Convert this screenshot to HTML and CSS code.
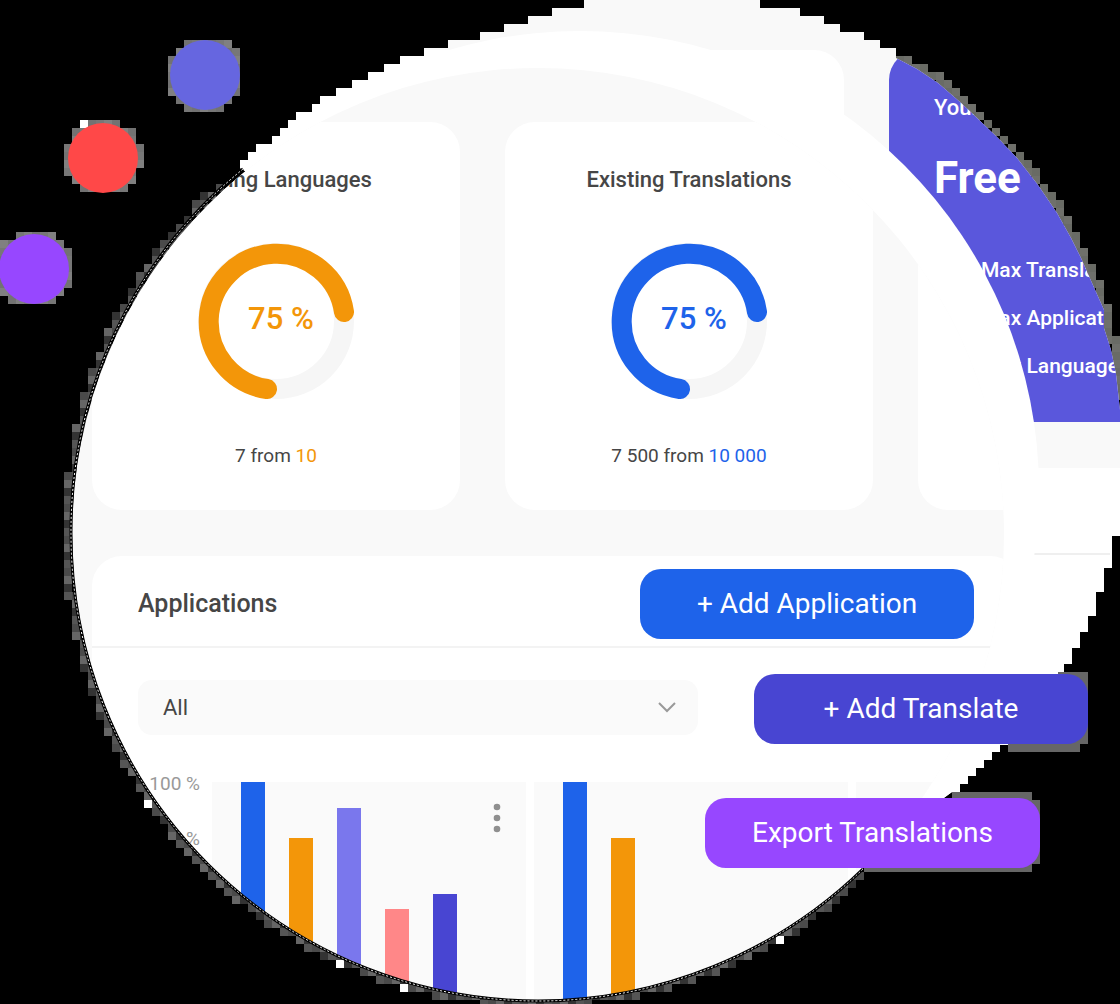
FILE: index.html
```html
<!DOCTYPE html>
<html lang="en">
<head>
<meta charset="utf-8">
<meta name="viewport" content="width=device-width, initial-scale=1">
<title>Translations dashboard</title>
<link rel="stylesheet" href="styles.css">
</head>
<body>
<main class="stage">
  <svg class="layer" aria-hidden="true">
    <g id="halo" shape-rendering="crispEdges">
      <circle data-tone="soft" cx="205" cy="75" r="34"/>
      <circle data-tone="soft" cx="103" cy="158" r="34"/>
      <circle data-tone="soft" cx="34" cy="269" r="34"/>
      <path data-tone="mixed" d="M222 186A470 470 0 0 0 68 534A470 470 0 0 0 538 1003A470 470 0 0 0 866 870"/>
      <path data-tone="olive" d="M900 58L940 80L962 100L980 116L1020 156L1060 211L1083 257L1090 272L1104 306L1113 345L1119 400"/>
    </g>
    <g class="specks">
      <path d="M80 120h8v8h-8zM144 800h8v8h-8zM336 960h8v8h-8zM400 984h8v8h-8zM776 936h8v8h-8z"/>
    </g>
    <g class="dots">
      <circle class="fill-indigo" cx="205" cy="75" r="35"/>
      <circle class="fill-red" cx="103" cy="158" r="35"/>
      <circle class="fill-violet" cx="34" cy="269" r="35"/>
    </g>
  </svg>

  <div class="backdrop">
    <div class="backdrop-card"></div>
    <section class="plan">
      <p class="plan-label">Your Plan</p>
      <h2 class="plan-name">Free</h2>
      <ul class="plan-limits">
        <li>Max Translations</li>
        <li>Max Applications</li>
        <li>Max Languages</li>
      </ul>
    </section>
    <div class="backdrop-panel"></div>
    <div class="ring"></div>
  </div>

  <div class="lens">
    <div class="stats">
      <article class="card">
        <h3 class="card-title">Existing Languages</h3>
        <div class="gauge tone-orange">
          <svg viewBox="0 0 156 156" aria-hidden="true"><circle class="track" cx="78" cy="78" r="68"/><path class="value" d="M146 69A68 68 0 1 0 69 146"/></svg>
          <span class="gauge-text">75 %</span>
        </div>
        <p class="card-note tone-orange">7 from <span>10</span></p>
      </article>
      <article class="card">
        <h3 class="card-title">Existing Translations</h3>
        <div class="gauge tone-blue">
          <svg viewBox="0 0 156 156" aria-hidden="true"><circle class="track" cx="78" cy="78" r="68"/><path class="value" d="M146 69A68 68 0 1 0 69 146"/></svg>
          <span class="gauge-text">75 %</span>
        </div>
        <p class="card-note tone-blue">7 500 from <span>10 000</span></p>
      </article>
      <article class="card"></article>
    </div>
    <section class="panel">
      <header class="panel-head">
        <h2 class="panel-title">Applications</h2>
        <button class="btn btn-blue" type="button">+ Add Application</button>
      </header>
      <div class="panel-body">
        <div class="select">
          <select aria-label="Application"><option>All</option></select>
          <svg viewBox="0 0 18 11" aria-hidden="true"><path d="M1 1l8 8 8-8"/></svg>
        </div>
        <div class="charts">
          <div class="axis"><span>100 %</span><span>80 %</span></div>
          <div class="chart">
            <i class="bar fill-blue"></i>
            <i class="bar bar-75 fill-orange"></i>
            <i class="bar bar-88 fill-lavender"></i>
            <i class="bar bar-43 fill-pink"></i>
            <i class="bar bar-50 fill-deep"></i>
            <button class="more" type="button" aria-label="More"><svg viewBox="0 0 8 30" aria-hidden="true"><circle cx="4" cy="4" r="3.3"/><circle cx="4" cy="15" r="3.3"/><circle cx="4" cy="26" r="3.3"/></svg></button>
          </div>
          <div class="chart">
            <i class="bar fill-blue"></i>
            <i class="bar bar-75 fill-orange"></i>
          </div>
          <div class="chart"></div>
        </div>
      </div>
    </section>
  </div>

  <svg class="layer layer-over" aria-hidden="true">
    <path class="edge-dark" d="M243 169A467 467 0 0 0 71 534A467 467 0 0 0 538 1001A467 467 0 0 0 863 869"/>
    <path class="edge-dash" d="M243 169A467 467 0 0 0 71 534A467 467 0 0 0 538 1001A467 467 0 0 0 863 869"/>
    <path class="halo-block" d="M1058 672h30v72h-8v8h-72v-10h50zM952 800v-8h80v8h8v64h-8v8H864v-8h88z"/>
  </svg>

  <button class="btn btn-deep floating-translate" type="button">+ Add Translate</button>
  <button class="btn btn-violet floating-export" type="button">Export Translations</button>
</main>
<script src="halo.js"></script>
</body>
</html>
```
FILE: styles.css
```css
* { box-sizing: border-box; }
body { margin: 0; background: #000; color: #464646; font-family: Roboto, "Liberation Sans", sans-serif; }
h2, h3, p, ul { margin: 0; padding: 0; font-weight: 500; }
ul { list-style: none; }
button, select { font: inherit; border: 0; }

.stage { position: relative; min-height: 1004px; padding: 68px 116px 4px 72px; overflow: hidden; }
.layer { position: absolute; inset: 0; width: 100%; height: 100%; }
.layer-over { pointer-events: none; }
.specks { fill: #fff; }
#halo circle, #halo path { fill: none; stroke: none; }
.halo-block { fill: #666; }
.edge-dark { fill: none; stroke: #000; stroke-width: 3; }
.edge-dash { fill: none; stroke: #fff; stroke-width: 1; stroke-dasharray: 2 2; }

.fill-indigo { fill: #6666e0; }
.fill-red { fill: #ff4848; }
.fill-violet { fill: #9747ff; }

/* Page seen behind the magnifying lens */
.backdrop {
  position: absolute;
  inset: 0;
  background: #f9f9f9;
  clip-path: path("M584 0H760V8H800V16H824V24H840V32H864V40H880V48H896V58L917 69L938 83L960 102L977 118L998 138L1017 158L1038 185L1057 213L1071 238L1081 258L1088 274L1104 310V328L1111 350L1116 374L1120 410V536H1112V568H1104V592H1096V616H1088V632H1080V648H1072V664H1064V680L1008 745H1000V752H992V760H984V768H976V776H968V784H960V792H952L900 830L537 534L245 171L240 168V160H248V152H256V144H272V136H280V128H288V120H296V112H312V104H320V96H336V88H352V80H368V72H384V64H400V56H424V48H448V40H480V32H504V24H528V16H552V8H584Z");
}
.backdrop-card { position: absolute; left: 200px; top: 50px; width: 644px; height: 372px; border-radius: 30px; background: #fff; }
.plan { position: absolute; left: 889px; top: 50px; width: 400px; height: 372px; padding: 46px 45px; border-radius: 30px 0 0 0; background: #5a57dc; color: #fff; }
.plan-label { font-size: 22px; line-height: 24px; }
.plan-name { margin-top: 34px; font-size: 44px; line-height: 48px; font-weight: 700; }
.plan-limits { margin-top: 44px; padding-left: 47px; font-size: 21px; line-height: 48px; font-weight: 500; }
.backdrop-panel { position: absolute; left: 0; right: 0; top: 468px; bottom: 0; background: #fff; }
.backdrop-panel::after { content: ""; position: absolute; left: 0; right: 10px; top: 85px; border-top: 2px solid #efefef; }
.ring { position: absolute; left: 121px; top: 31px; width: 918px; height: 918px; border-radius: 50%; background: #fff; }

/* Lens */
.lens { position: relative; max-width: 932px; aspect-ratio: 1; padding: 54px 0 0 20px; background: #f9f9f9; clip-path: circle(50%); overflow: hidden; }
.stats { display: flex; gap: 45px; }
.card { flex: 0 0 368px; min-height: 388px; padding: 46px 0 42px; border-radius: 30px; background: #fff; display: flex; flex-direction: column; align-items: center; }
.card-title { font-size: 22px; line-height: 24px; }
.gauge { display: grid; width: 156px; height: 156px; margin: 51px 0 45px; place-items: center; }
.gauge > * { grid-area: 1 / 1; }
.gauge svg { width: 156px; height: 156px; fill: none; stroke-width: 20; }
.track { stroke: #f6f6f6; }
.value { stroke: currentColor; stroke-linecap: round; }
.gauge-text { padding: 0 0 4px 10px; font-size: 31px; line-height: 32px; font-weight: 500; }
.tone-orange, .tone-orange span { color: #f39609; }
.tone-blue, .tone-blue span { color: #1e63ea; }
.card-note.card-note { color: #464646; font-size: 19px; line-height: 24px; font-weight: 400; }

.panel { width: 928px; margin-top: 46px; border-radius: 30px; background: #fff; }
.panel-head { display: flex; align-items: center; justify-content: space-between; height: 92px; padding: 6px 46px 0; border-bottom: 2px solid #f3f3f3; }
.panel-title { font-size: 25px; line-height: 28px; }
.btn { width: 334px; height: 70px; padding: 0; border-radius: 21px; color: #fff; font-size: 28px; line-height: 32px; font-weight: 400; }
.btn-blue { background: #1e63ea; }
.btn-deep { background: #4845d2; }
.btn-violet { background: #9747ff; }

.panel-body { padding: 32px 0 0 46px; }
.select { display: grid; width: 560px; align-items: center; }
.select > * { grid-area: 1 / 1; }
.select select { width: 100%; height: 55px; padding: 0 25px; border-radius: 14px; background: #fafafa; color: #464646; font-size: 22px; appearance: none; }
.select svg { justify-self: end; width: 18px; height: 11px; margin-right: 22px; fill: none; stroke: #999; stroke-width: 2; }
.charts { display: flex; gap: 8px; margin-top: 47px; }
.axis { display: flex; flex: 0 0 62px; flex-direction: column; align-items: flex-end; gap: 31px; margin: -10px 4px 0 0; color: #999; font-size: 19px; line-height: 24px; white-space: nowrap; }
.chart { display: flex; flex: 0 0 314px; align-items: flex-end; gap: 24px; height: 224px; padding-left: 29px; background: #fafafa; }
.bar { width: 24px; height: 224px; }
.bar-88 { height: 198px; }
.bar-75 { height: 168px; }
.bar-50 { height: 112px; }
.bar-43 { height: 97px; }
.bar.fill-blue { background: #1e63ea; }
.bar.fill-orange { background: #f39609; }
.bar.fill-lavender { background: #7a77ed; }
.bar.fill-pink { background: #ff8788; }
.bar.fill-deep { background: #4845d2; }
.more { align-self: flex-start; width: 8px; height: 30px; margin: 21px 0 0 12px; padding: 0; background: none; }
.more svg { display: block; fill: #8f8f8f; }

.floating-translate { position: absolute; left: 754px; top: 674px; }
.floating-export { position: absolute; left: 705px; top: 798px; width: 335px; }
```
FILE: halo.js
```js
// Builds the blocky glow that follows each outline on an 8px grid.
const CELL = 8;
const TONES = {
  soft: ["#777", "#808080", "#727272"],
  mixed: ["#4a4a4a", "#666", "#333", "#555"],
  olive: ["#696b65", "#6f706b"]
};
const halo = document.getElementById("halo");
[...halo.children].forEach((shape) => {
  const tones = TONES[shape.dataset.tone];
  const seen = new Set();
  for (let d = 0; d < shape.getTotalLength(); d += 1) {
    const p = shape.getPointAtLength(d);
    const x = Math.floor(p.x / CELL) * CELL;
    const y = Math.floor(p.y / CELL) * CELL;
    if (seen.has(x + "," + y)) continue;
    const rect = document.createElementNS("http://www.w3.org/2000/svg", "rect");
    rect.setAttribute("x", x);
    rect.setAttribute("y", y);
    rect.setAttribute("width", CELL);
    rect.setAttribute("height", CELL);
    rect.setAttribute("fill", tones[seen.size % tones.length]);
    seen.add(x + "," + y);
    halo.appendChild(rect);
  }
});
```
